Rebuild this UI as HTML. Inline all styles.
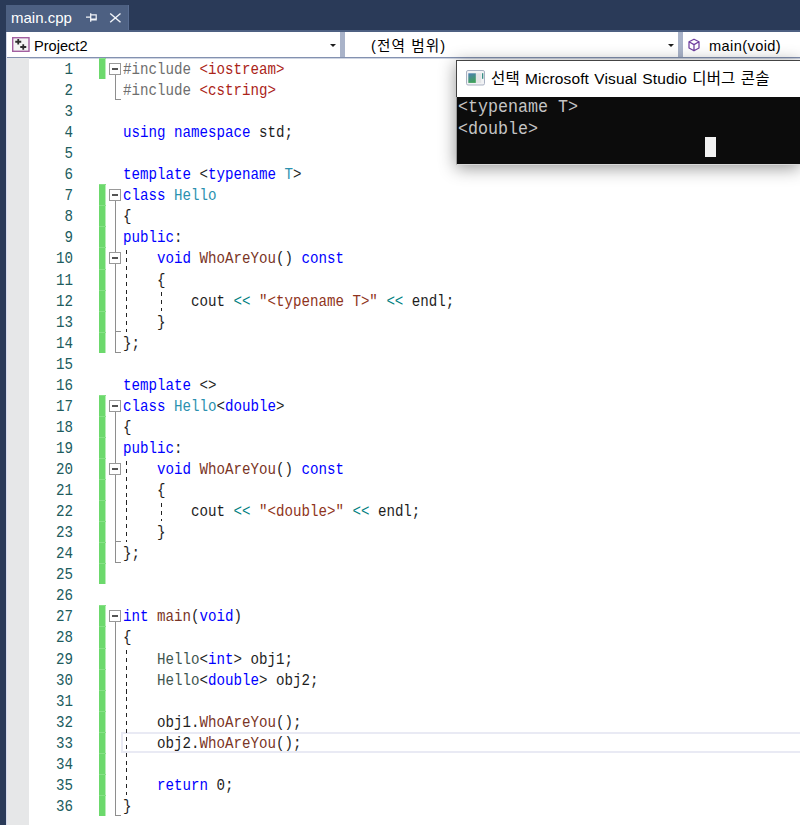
<!DOCTYPE html>
<html lang="ko"><head><meta charset="utf-8"><title>main.cpp</title>
<style>
html,body{margin:0;padding:0}
body{width:800px;height:825px;overflow:hidden;position:relative;background:#fff;font-family:"Liberation Sans","Noto Sans CJK KR",sans-serif}
div,span{box-sizing:border-box}
.abs{position:absolute}
#topbar{left:0;top:0;width:800px;height:32px;background:#2a3a58}
#leftbar{left:0;top:0;width:6px;height:825px;background:#2a3a58}
#tab{left:6px;top:5px;width:123px;height:26px;background:#4d6082;border-right:1px solid #5a6e93}
#tabline{left:6px;top:30px;width:794px;height:2px;background:#4d6082}
#tabtxt{left:11px;top:9px;font-size:15px;line-height:18px;color:#fff;white-space:pre}
#nav{left:6px;top:32px;width:794px;height:25px;background:#fff}
#navline{left:6px;top:57px;width:794px;height:2px;background:linear-gradient(#8391b0 0,#8391b0 50%,#cfd5e2 50%,#cfd5e2 100%)}
.navtxt{font-size:14.6px;line-height:18px;color:#000;white-space:pre;top:37px}
.sep{top:32px;height:25px;width:5px;background:#a9b3c9}
.arrow{width:0;height:0;border-left:3px solid transparent;border-right:3px solid transparent;border-top:3.5px solid #1e1e1e;top:44px}
#margin{left:7px;top:58px;width:22px;height:767px;background:#e6e7e8}
#edge{left:6px;top:32px;width:1px;height:793px;background:#d5daeb}
.ln{left:31.5px;width:41.5px;text-align:right;color:#205c5e;font-family:"Liberation Mono",monospace;font-size:14.17px;line-height:21px;height:21px;white-space:pre;transform:scaleY(1.2);transform-origin:0 14px}
.cl{left:123px;color:#1e1e1e;font-family:"Liberation Mono",monospace;font-size:14.17px;line-height:21px;height:21px;white-space:pre;transform:scaleY(1.12);transform-origin:0 14px}
.g{left:99px;width:7px;background:linear-gradient(to right,#6cd96c 0,#6cd96c 6px,#b9edb9 6px);border-top:1px solid #86e086}
.box{left:109px;width:12px;height:12px;border:1px solid #999;background:#fff}
.box i{position:absolute;left:2px;top:4px;width:6px;height:2px;background:#555}
.vl{width:1px;background:#8e8e8e}
.hl{height:1px;background:#8e8e8e}
.dg{width:1px;background:repeating-linear-gradient(to bottom,#222 0,#222 4px,transparent 4px,transparent 7.9px)}
#cur{left:121px;width:679px;border:2px solid #e9eaf4;border-right:none}
#con{left:456px;top:60px;width:344px;height:105px;background:#0c0c0c;box-shadow:0 3px 16px rgba(0,0,0,.42);border-left:1px solid #9a9a9a;border-bottom:1px solid #d8d8d8}
#contitle{left:-1px;top:0;width:345px;height:37px;background:#fff;border-top:1px solid #444;border-left:1px solid #444}
#contxt{left:1px;font-family:"Liberation Mono",monospace;font-size:16.67px;line-height:19.5px;color:#c4c4c4;white-space:pre;transform:scaleY(1.12);transform-origin:0 16px}
#concur{left:248px;top:77px;width:11px;height:20px;background:#f2f2f2}
</style></head><body>
<div class="abs" id="topbar"></div>
<div class="abs" id="leftbar"></div>
<div class="abs" id="tab"></div>
<div class="abs" id="tabline"></div>
<div class="abs" id="tabtxt">main.cpp</div>
<svg class="abs" style="left:85px;top:12px" width="14" height="12" viewBox="0 0 14 12"><g fill="none" stroke="#f2f4f8"><path d="M1 5.2H5.5M5.7 1.2V9.8" stroke-width="1.3"/><path d="M5.7 2.9H11.2V7" stroke-width="1.2"/><path d="M5.7 7.5H11.8" stroke-width="2"/></g></svg>
<svg class="abs" style="left:109px;top:12px" width="13" height="12" viewBox="0 0 13 12"><path d="M1.2 1.5L11.5 10.2M11.5 1.5L1.2 10.2" fill="none" stroke="#f2f4f8" stroke-width="1.4"/></svg>
<div class="abs" id="nav"></div>
<div class="abs" id="navline"></div>
<div class="abs" id="edge"></div>
<svg class="abs" style="left:12px;top:37px" width="18" height="15" viewBox="0 0 18 15"><rect x="0.7" y="0.7" width="16.3" height="13.6" fill="#f4f4f4" stroke="#a25fa0" stroke-width="1.4"/><path d="M6.25 2V7.5M3.25 4.75H9.25M11.25 7.25V12.75M8.25 10H14.25" fill="none" stroke="#2e2e2e" stroke-width="1.8"/></svg>
<div class="abs navtxt" style="left:34px">Project2</div>
<div class="abs arrow" style="left:329.5px"></div>
<div class="abs sep" style="left:340px"></div>
<div class="abs navtxt" style="left:371px;letter-spacing:1.1px">(전역 범위)</div>
<div class="abs arrow" style="left:667.5px"></div>
<div class="abs sep" style="left:678px"></div>
<svg class="abs" style="left:687px;top:38px" width="14" height="14" viewBox="0 0 14 14"><path d="M7 1.2L12 3.8V10L7 12.8L2 10V3.8ZM2 3.8L7 6.6L12 3.8M7 6.6V12.8" fill="none" stroke="#7040a0" stroke-width="1.25" stroke-linejoin="round"/></svg>
<div class="abs navtxt" style="left:709px;letter-spacing:.4px">main(void)</div>
<div class="abs" id="margin"></div>

<div class="abs g" style="top:58px;height:21px"></div>
<div class="abs g" style="top:184px;height:21px"></div>
<div class="abs g" style="top:205px;height:21px"></div>
<div class="abs g" style="top:226px;height:21px"></div>
<div class="abs g" style="top:247px;height:22px"></div>
<div class="abs g" style="top:269px;height:21px"></div>
<div class="abs g" style="top:290px;height:21px"></div>
<div class="abs g" style="top:311px;height:21px"></div>
<div class="abs g" style="top:332px;height:21px"></div>
<div class="abs g" style="top:395px;height:21px"></div>
<div class="abs g" style="top:416px;height:21px"></div>
<div class="abs g" style="top:437px;height:21px"></div>
<div class="abs g" style="top:458px;height:21px"></div>
<div class="abs g" style="top:479px;height:21px"></div>
<div class="abs g" style="top:500px;height:21px"></div>
<div class="abs g" style="top:521px;height:21px"></div>
<div class="abs g" style="top:542px;height:21px"></div>
<div class="abs g" style="top:563px;height:21px"></div>
<div class="abs g" style="top:605px;height:21px"></div>
<div class="abs g" style="top:626px;height:22px"></div>
<div class="abs g" style="top:648px;height:21px"></div>
<div class="abs g" style="top:669px;height:21px"></div>
<div class="abs g" style="top:690px;height:21px"></div>
<div class="abs g" style="top:711px;height:21px"></div>
<div class="abs g" style="top:732px;height:21px"></div>
<div class="abs g" style="top:753px;height:21px"></div>
<div class="abs g" style="top:774px;height:21px"></div>
<div class="abs g" style="top:795px;height:21px"></div>
<div class="abs" id="cur" style="top:732px;height:20.5px"></div>
<div class="abs vl" style="left:115px;top:68px;height:32px"></div>
<div class="abs hl" style="left:115px;top:99px;width:6px"></div>
<div class="abs vl" style="left:115px;top:194px;height:159px"></div>
<div class="abs hl" style="left:115px;top:331px;width:6px"></div>
<div class="abs hl" style="left:115px;top:352px;width:6px"></div>
<div class="abs vl" style="left:115px;top:405px;height:158px"></div>
<div class="abs hl" style="left:115px;top:541px;width:6px"></div>
<div class="abs hl" style="left:115px;top:562px;width:6px"></div>
<div class="abs vl" style="left:115px;top:615px;height:201px"></div>
<div class="abs hl" style="left:115px;top:815px;width:6px"></div>
<div class="abs box" style="top:63px"><i></i></div>
<div class="abs box" style="top:189px"><i></i></div>
<div class="abs box" style="top:252px"><i></i></div>
<div class="abs box" style="top:400px"><i></i></div>
<div class="abs box" style="top:463px"><i></i></div>
<div class="abs box" style="top:610px"><i></i></div>
<div class="abs dg" style="left:126px;top:250px;height:82px"></div>
<div class="abs dg" style="left:161px;top:292px;height:19px"></div>
<div class="abs dg" style="left:126px;top:461px;height:81px"></div>
<div class="abs dg" style="left:161px;top:503px;height:18px"></div>
<div class="abs dg" style="left:126px;top:650px;height:145px"></div>
<div class="abs ln" style="top:60px">1</div>
<div class="abs cl" style="top:60px"><span style="color:#6e6e6e">#include </span><span style="color:#ab2418">&lt;iostream&gt;</span></div>
<div class="abs ln" style="top:81px">2</div>
<div class="abs cl" style="top:81px"><span style="color:#6e6e6e">#include </span><span style="color:#ab2418">&lt;cstring&gt;</span></div>
<div class="abs ln" style="top:102px">3</div>
<div class="abs ln" style="top:123px">4</div>
<div class="abs cl" style="top:123px"><span style="color:#0000ff">using namespace </span>std;</div>
<div class="abs ln" style="top:144px">5</div>
<div class="abs ln" style="top:165px">6</div>
<div class="abs cl" style="top:165px"><span style="color:#0000ff">template </span>&lt;<span style="color:#0000ff">typename </span><span style="color:#2b91af">T</span>&gt;</div>
<div class="abs ln" style="top:186px">7</div>
<div class="abs cl" style="top:186px"><span style="color:#0000ff">class </span><span style="color:#2b91af">Hello</span></div>
<div class="abs ln" style="top:207px">8</div>
<div class="abs cl" style="top:207px">{</div>
<div class="abs ln" style="top:228px">9</div>
<div class="abs cl" style="top:228px"><span style="color:#0000ff">public</span>:</div>
<div class="abs ln" style="top:249px">10</div>
<div class="abs cl" style="top:249px">    <span style="color:#0000ff">void </span><span style="color:#7a3526">WhoAreYou</span>() <span style="color:#0000ff">const</span></div>
<div class="abs ln" style="top:271px">11</div>
<div class="abs cl" style="top:271px">    {</div>
<div class="abs ln" style="top:292px">12</div>
<div class="abs cl" style="top:292px">        cout <span style="color:#008080">&lt;&lt;</span> <span style="color:#8f3420">"&lt;typename T&gt;"</span> <span style="color:#008080">&lt;&lt;</span> endl;</div>
<div class="abs ln" style="top:313px">13</div>
<div class="abs cl" style="top:313px">    }</div>
<div class="abs ln" style="top:334px">14</div>
<div class="abs cl" style="top:334px">};</div>
<div class="abs ln" style="top:355px">15</div>
<div class="abs ln" style="top:376px">16</div>
<div class="abs cl" style="top:376px"><span style="color:#0000ff">template </span>&lt;&gt;</div>
<div class="abs ln" style="top:397px">17</div>
<div class="abs cl" style="top:397px"><span style="color:#0000ff">class </span><span style="color:#2b91af">Hello</span>&lt;<span style="color:#0000ff">double</span>&gt;</div>
<div class="abs ln" style="top:418px">18</div>
<div class="abs cl" style="top:418px">{</div>
<div class="abs ln" style="top:439px">19</div>
<div class="abs cl" style="top:439px"><span style="color:#0000ff">public</span>:</div>
<div class="abs ln" style="top:460px">20</div>
<div class="abs cl" style="top:460px">    <span style="color:#0000ff">void </span><span style="color:#7a3526">WhoAreYou</span>() <span style="color:#0000ff">const</span></div>
<div class="abs ln" style="top:481px">21</div>
<div class="abs cl" style="top:481px">    {</div>
<div class="abs ln" style="top:502px">22</div>
<div class="abs cl" style="top:502px">        cout <span style="color:#008080">&lt;&lt;</span> <span style="color:#8f3420">"&lt;double&gt;"</span> <span style="color:#008080">&lt;&lt;</span> endl;</div>
<div class="abs ln" style="top:523px">23</div>
<div class="abs cl" style="top:523px">    }</div>
<div class="abs ln" style="top:544px">24</div>
<div class="abs cl" style="top:544px">};</div>
<div class="abs ln" style="top:565px">25</div>
<div class="abs ln" style="top:586px">26</div>
<div class="abs ln" style="top:607px">27</div>
<div class="abs cl" style="top:607px"><span style="color:#0000ff">int </span><span style="color:#7a3526">main</span>(<span style="color:#0000ff">void</span>)</div>
<div class="abs ln" style="top:628px">28</div>
<div class="abs cl" style="top:628px">{</div>
<div class="abs ln" style="top:650px">29</div>
<div class="abs cl" style="top:650px">    <span style="color:#3f5650">Hello</span>&lt;<span style="color:#0000ff">int</span>&gt; obj1;</div>
<div class="abs ln" style="top:671px">30</div>
<div class="abs cl" style="top:671px">    <span style="color:#3f5650">Hello</span>&lt;<span style="color:#0000ff">double</span>&gt; obj2;</div>
<div class="abs ln" style="top:692px">31</div>
<div class="abs ln" style="top:713px">32</div>
<div class="abs cl" style="top:713px">    obj1.<span style="color:#7a3526">WhoAreYou</span>();</div>
<div class="abs ln" style="top:734px">33</div>
<div class="abs cl" style="top:734px">    obj2.<span style="color:#7a3526">WhoAreYou</span>();</div>
<div class="abs ln" style="top:755px">34</div>
<div class="abs ln" style="top:776px">35</div>
<div class="abs cl" style="top:776px">    <span style="color:#0000ff">return </span>0;</div>
<div class="abs ln" style="top:797px">36</div>
<div class="abs cl" style="top:797px">}</div>
<div class="abs" id="con">
<div class="abs" id="contitle"></div>
<svg class="abs" style="left:9px;top:10px" width="19" height="16" viewBox="0 0 19 16"><defs><linearGradient id="cg" x1="0" y1="0" x2="0.3" y2="1"><stop offset="0" stop-color="#4d7fb5"/><stop offset="1" stop-color="#3f9f5c"/></linearGradient></defs><rect x="0.5" y="0.5" width="18" height="14.5" rx="1.5" fill="#f1f2f4" stroke="#a9b1c2"/><rect x="2.3" y="3.3" width="7.6" height="9.6" fill="url(#cg)"/><rect x="9.9" y="3.3" width="5.3" height="9.6" fill="#e3e4e6"/><rect x="16" y="3.2" width="1.3" height="5.6" fill="#3a8f86"/></svg>
<div class="abs" style="left:34px;top:9px;font-size:15.5px;line-height:20px;color:#000;white-space:pre;letter-spacing:.12px;word-spacing:.9px">선택 Microsoft Visual Studio 디버그 콘솔</div>
<div class="abs" id="contxt" style="top:38px">&lt;typename T&gt;
&lt;double&gt;</div>
<div class="abs" id="concur"></div>
</div>
</body></html>
